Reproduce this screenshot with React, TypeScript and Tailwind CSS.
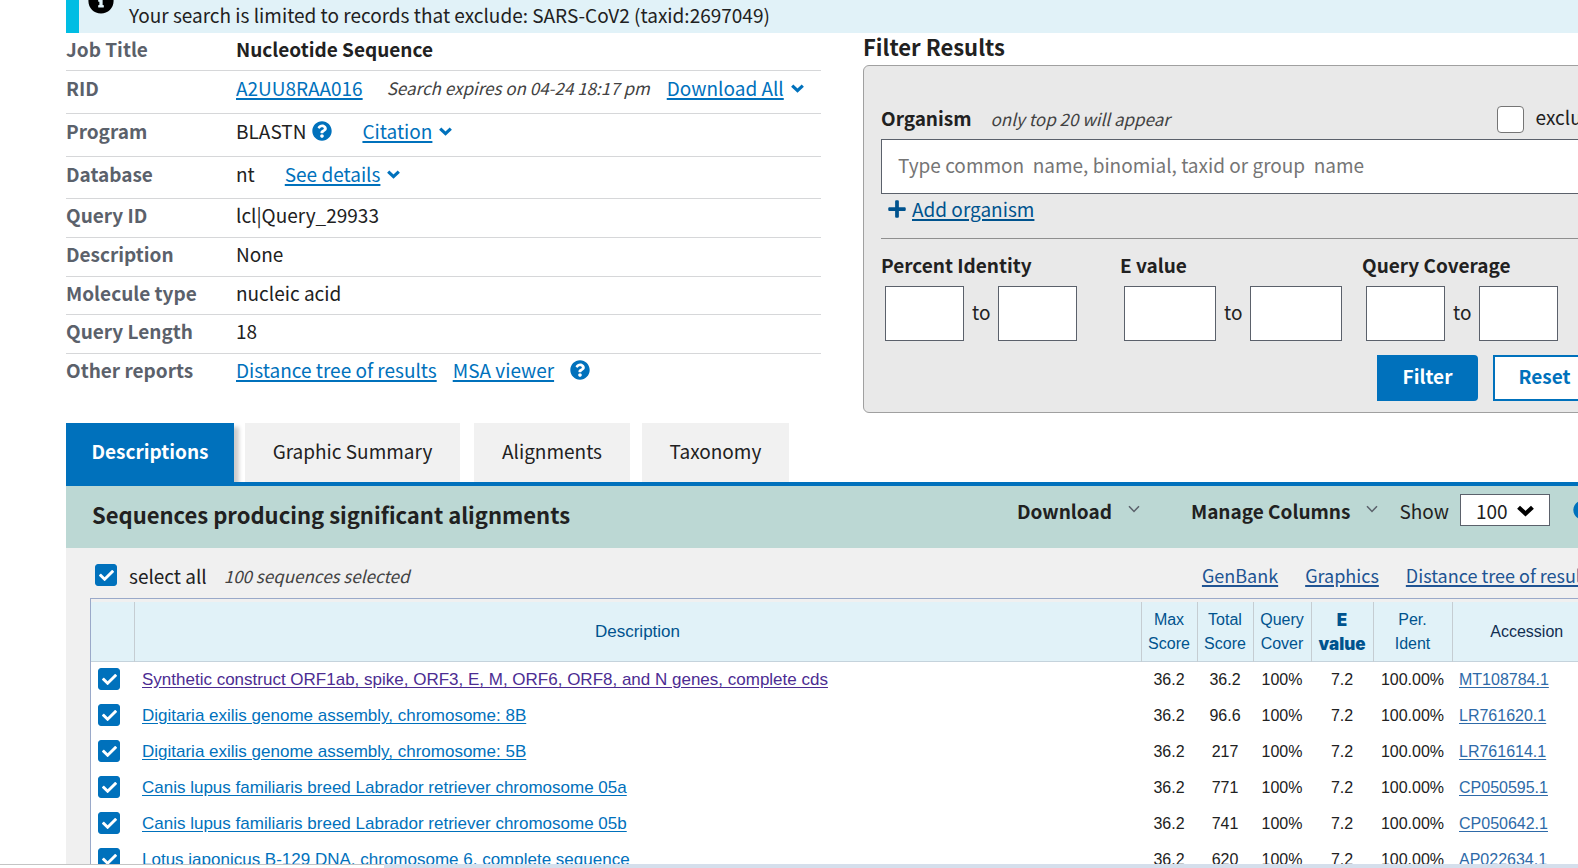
import type { ReactNode } from "react";
import { FaCheck, FaInfoCircle, FaPlus, FaQuestionCircle } from "react-icons/fa";

const LINK = "text-[#0071bc] underline decoration-2 underline-offset-2";

function Chevron({ className }: { className: string }) {
  return (
    <svg viewBox="0 0 13 9" className={className} fill="none" stroke="currentColor" aria-hidden="true">
      <path d="M1.2 1.6 6.5 6.6 11.8 1.6" strokeWidth="3.2" />
    </svg>
  );
}

function ThinChevron() {
  return (
    <svg viewBox="0 0 12 8" className="mb-1 h-2 w-3 text-[#5b616b]" fill="none" stroke="currentColor" aria-hidden="true">
      <path d="M1 1.2 6 6.4 11 1.2" strokeWidth="1.5" />
    </svg>
  );
}

function Help({ label }: { label: string }) {
  return (
    <button type="button" aria-label={label} className="shrink-0 text-[#0071bc]">
      <FaQuestionCircle className="size-5" />
    </button>
  );
}

function Check({ id, label }: { id: string; label?: string }) {
  return (
    <span className="grid size-[22px] shrink-0 place-items-center">
      <input
        id={id}
        type="checkbox"
        defaultChecked
        aria-label={label}
        className="peer col-start-1 row-start-1 size-[22px] appearance-none rounded-[3px] border border-[#0071bc] bg-white checked:bg-[#0071bc]"
      />
      <FaCheck className="pointer-events-none col-start-1 row-start-1 size-[15px] text-white" />
    </span>
  );
}

function InfoRow({ label, height, children }: { label: string; height: string; children: ReactNode }) {
  return (
    <div className={`flex items-start border-b border-[#d6d7d9] last:border-b-0 ${height}`}>
      <dt className="w-[170px] shrink-0 font-bold text-[#5b616b]">{label}</dt>
      <dd className="flex items-center">{children}</dd>
    </div>
  );
}

function Range({ label, id, field, className }: { label: string; id: string; field: string; className: string }) {
  return (
    <fieldset className={className}>
      <legend className="font-bold">{label}</legend>
      <div className="mt-[9px] flex items-center gap-2 pl-1">
        <input aria-label={`${label} from`} id={`${id}-from`} className={`h-[55px] border border-[#5b616b] bg-white px-2 ${field}`} />
        <span className="pb-1">to</span>
        <input aria-label={`${label} to`} id={`${id}-to`} className={`h-[55px] border border-[#5b616b] bg-white px-2 ${field}`} />
      </div>
    </fieldset>
  );
}

const hits = [
  { name: "Synthetic construct ORF1ab, spike, ORF3, E, M, ORF6, ORF8, and N genes, complete cds", total: "36.2", acc: "MT108784.1", visited: true },
  { name: "Digitaria exilis genome assembly, chromosome: 8B", total: "96.6", acc: "LR761620.1" },
  { name: "Digitaria exilis genome assembly, chromosome: 5B", total: "217", acc: "LR761614.1" },
  { name: "Canis lupus familiaris breed Labrador retriever chromosome 05a", total: "771", acc: "CP050595.1" },
  { name: "Canis lupus familiaris breed Labrador retriever chromosome 05b", total: "741", acc: "CP050642.1" },
  { name: "Lotus japonicus B-129 DNA, chromosome 6, complete sequence", total: "620", acc: "AP022634.1" },
];

const TH = "border-l border-[#c5cdd2] px-0 pt-0.5 pb-0 font-normal";
const TD = "px-0 pt-0.5 pb-0";

export default function App() {
  return (
    <div className="relative h-screen overflow-hidden bg-white font-['Noto_Sans_CJK_SC',sans-serif] text-[19px] leading-6 text-[#212121]">
      <div className="-mr-12 ml-[66px]">
        <div className="flex h-[33px] overflow-hidden border-l-[13px] border-[#00bde3] bg-[#e1f2f8] pl-[9px]">
          <FaInfoCircle className="-mt-3 size-[26px] shrink-0 text-black" />
          <p className="ml-[15px] pt-[3px]">Your search is limited to records that exclude: SARS-CoV2 (taxid:2697049)</p>
        </div>

        <div className="flex items-start">
          <dl className="w-[755px] shrink-0">
            <InfoRow label="Job Title" height="h-[38px] pt-1">
              <strong>Nucleotide Sequence</strong>
            </InfoRow>
            <InfoRow label="RID" height="h-[43px] pt-[5px]">
              <a href="#rid" className={LINK}>A2UU8RAA016</a>
              <em className="ml-6 text-[17px] text-[#424242]">Search expires on 04-24 18:17 pm</em>
              <a href="#download-all" className={`ml-[17px] ${LINK}`}>Download All</a>
              <Chevron className="ml-[7px] h-[9px] w-[13px] text-[#0071bc]" />
            </InfoRow>
            <InfoRow label="Program" height="h-[43px] pt-[5px]">
              <span className="mr-[6px]">BLASTN</span>
              <Help label="Program help" />
              <a href="#citation" className={`ml-[30px] ${LINK}`}>Citation</a>
              <Chevron className="ml-[7px] h-[9px] w-[13px] text-[#0071bc]" />
            </InfoRow>
            <InfoRow label="Database" height="h-[42px] pt-[5px]">
              <span>nt</span>
              <a href="#details" className={`ml-[30px] ${LINK}`}>See details</a>
              <Chevron className="ml-[7px] h-[9px] w-[13px] text-[#0071bc]" />
            </InfoRow>
            <InfoRow label="Query ID" height="h-[39px] pt-1">lcl|Query_29933</InfoRow>
            <InfoRow label="Description" height="h-[39px] pt-1">None</InfoRow>
            <InfoRow label="Molecule type" height="h-[38px] pt-1">nucleic acid</InfoRow>
            <InfoRow label="Query Length" height="h-[39px] pt-1">18</InfoRow>
            <InfoRow label="Other reports" height="h-[39px] pt-1">
              <a href="#tree" className={LINK}>Distance tree of results</a>
              <a href="#msa" className={`mr-4 ml-4 ${LINK}`}>MSA viewer</a>
              <Help label="Reports help" />
            </InfoRow>
          </dl>

          <section className="ml-[42px] min-w-0 flex-1">
            <h2 className="h-8 text-[22px] leading-[26px] font-bold">Filter Results</h2>
            <form className="h-[348px] rounded-md border border-[#a0a0a0] bg-[#e9e9e9] px-[17px] pt-[39px]">
              <div className="flex h-[34px] items-start">
                <label htmlFor="organism" className="pt-px font-bold">Organism</label>
                <em className="ml-[19px] pt-[2px] text-[17px] text-[#424242]">only top 20 will appear</em>
                <label className="mr-1 ml-auto flex items-center gap-3">
                  <input type="checkbox" className="size-[27px] appearance-none rounded-[4px] border border-[#757575] bg-white" />
                  <span className="pb-1">exclude</span>
                </label>
              </div>
              <input
                id="organism"
                placeholder="Type common  name, binomial, taxid or group  name"
                className="block h-[55px] w-full border border-[#5b616b] bg-white px-4 pb-1 placeholder:text-[#757575]"
              />
              <div className="flex h-[45px] items-start border-b border-[#8f8f8f] pt-[3px] pl-[6px] text-[#00538e]">
                <FaPlus className="mt-[2px] size-5" />
                <a href="#add" className="ml-[5px] underline decoration-2 underline-offset-2">Add organism</a>
              </div>
              <div className="flex pt-[14px]">
                <Range label="Percent Identity" id="ident" field="w-[79px]" className="w-[239px]" />
                <Range label="E value" id="evalue" field="w-[92px]" className="w-[242px]" />
                <Range label="Query Coverage" id="cov" field="w-[79px]" className="w-[200px]" />
              </div>
              <div className="flex justify-end gap-[15px] pt-[14px] pr-3">
                <button type="button" className="h-[46px] w-[101px] rounded-r-[4px] bg-[#0071bc] pb-1 font-bold text-white">Filter</button>
                <button type="button" className="h-[46px] w-[103px] rounded-r-[4px] border-2 border-[#0071bc] bg-white pb-1 font-bold text-[#0071bc]">Reset</button>
              </div>
            </form>
          </section>
        </div>

        <div role="tablist" className="mt-[10px] flex h-[63px] overflow-hidden border-b-4 border-[#0071bc]">
          <button role="tab" aria-selected="true" className="mr-[11px] w-[168px] bg-[#0071bc] pb-1 font-bold text-white shadow-[5px_4px_4px_rgba(0,0,0,0.2)]">Descriptions</button>
          <button role="tab" aria-selected="false" className="mr-[14px] w-[215px] bg-[#f1f1f1] pb-1">Graphic Summary</button>
          <button role="tab" aria-selected="false" className="mr-3 w-[156px] bg-[#f1f1f1] pb-1">Alignments</button>
          <button role="tab" aria-selected="false" className="w-[147px] bg-[#f1f1f1] pb-1">Taxonomy</button>
        </div>

        <div className="flex h-[62px] items-start bg-[#bcd8d4] pt-2 pl-[26px]">
          <h2 className="pt-1 text-[22px] leading-8 font-bold">Sequences producing significant alignments</h2>
          <div className="ml-auto flex h-8 items-center pr-[33px]">
            <button type="button" className="flex items-center gap-4 pt-px font-bold">Download <ThinChevron /></button>
            <button type="button" className="ml-[51px] flex items-center gap-4 pt-px font-bold">Manage Columns <ThinChevron /></button>
            <label htmlFor="show" className="ml-[21px] pt-px">Show</label>
            <span className="relative ml-[11px] h-8 w-[90px]">
              <select id="show" defaultValue="100" className="h-8 w-[90px] appearance-none border border-[#5b616b] bg-white pt-0.5 pl-[15px] text-[#212121]">
                <option>10</option>
                <option>50</option>
                <option>100</option>
              </select>
              <Chevron className="pointer-events-none absolute top-[11px] right-4 h-3 w-[17px] text-black" />
            </span>
            <span className="ml-[23px] flex"><Help label="Show help" /></span>
          </div>
        </div>

        <div className="bg-[#f0f0f0] pl-6">
          <div className="flex h-[50px] items-center pt-1 pl-[5px]">
            <Check id="all" />
            <label htmlFor="all" className="ml-3 pt-px">select all</label>
            <em className="ml-[17px] pt-0.5 text-[17px] text-[#424242]">100 sequences selected</em>
            <nav className="ml-auto flex gap-[27px] pr-[30px] text-[18px] text-[#205493]">
              <a href="#genbank" className="underline decoration-2 underline-offset-2">GenBank</a>
              <a href="#graphics" className="underline decoration-2 underline-offset-2">Graphics</a>
              <a href="#tree-results" className="underline decoration-2 underline-offset-2">Distance tree of results</a>
            </nav>
          </div>
          <div className="mr-[25px] border-t border-l border-[#9aa9c9] pt-[3px] font-['Liberation_Sans',sans-serif] text-[16px]">
            <table className="w-full table-fixed border-collapse bg-white">
              <thead className="bg-[#e1f2f8] text-[#00538e]">
                <tr className="h-[59px] border-b border-[#c5d3dc]">
                  <th className="w-[43px]"></th>
                  <th className={`text-[17px] ${TH}`}>Description</th>
                  <th className={`w-14 ${TH}`}>Max Score</th>
                  <th className={`w-14 ${TH}`}>Total Score</th>
                  <th className={`w-[58px] ${TH}`}>Query Cover</th>
                  <th className="w-[62px] border-l border-[#c5cdd2] px-0 pt-0.5 pb-0 font-['Inter',sans-serif] text-[17px] font-black">E<br />value</th>
                  <th className={`w-[79px] ${TH}`}>Per.<br />Ident</th>
                  <th className={`w-[149px] text-[#112e51] ${TH}`}>Accession</th>
                </tr>
              </thead>
              <tbody className="text-center">
                {hits.map((h, i) => (
                  <tr key={h.acc} className="h-9">
                    <td className="p-0 pl-[7px]"><Check id={`hit-${i}`} label={`Select ${h.acc}`} /></td>
                    <td className="truncate pt-0.5 pr-0 pb-0 pl-2 text-left text-[17px]">
                      <a href={`#${h.acc}`} className={h.visited ? "text-[#4c2c92] underline underline-offset-2" : "text-[#0071bc] underline underline-offset-2"}>{h.name}</a>
                    </td>
                    <td className={TD}>36.2</td>
                    <td className={TD}>{h.total}</td>
                    <td className={TD}>100%</td>
                    <td className={TD}>7.2</td>
                    <td className={TD}>100.00%</td>
                    <td className="pt-0.5 pr-0 pb-0 pl-[7px] text-left">
                      <a href={`#acc-${h.acc}`} className="text-[#2e6aa8] underline underline-offset-2">{h.acc}</a>
                    </td>
                  </tr>
                ))}
              </tbody>
            </table>
          </div>
        </div>
      </div>
      <div className="absolute inset-x-0 bottom-0 flex h-1 bg-[#d5dfec]">
        <div className="w-96 border-t border-[#c4c4c4] bg-white" />
      </div>
    </div>
  );
}
